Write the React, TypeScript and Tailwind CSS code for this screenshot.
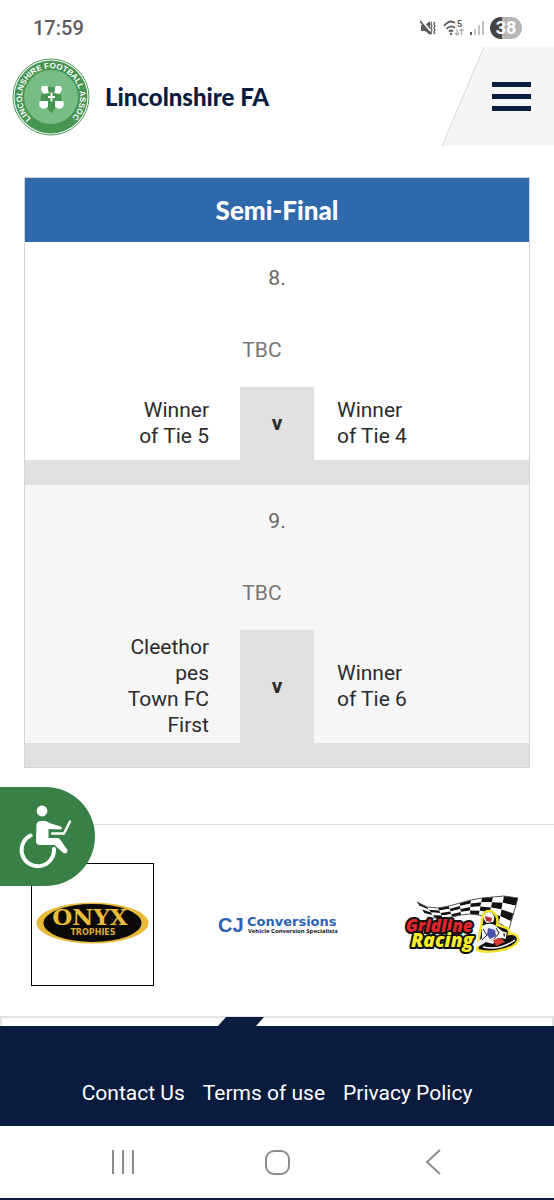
const rounds = [
  { number: 8, date: 'TBC', home: 'Winner of Tie 5', away: 'Winner of Tie 4', bg: 'bg-white' },
  { number: 9, date: 'TBC', home: 'Cleethorpes Town FC First', away: 'Winner of Tie 6', bg: 'bg-[#f6f6f6]' },
]

const footerLinks = ['Contact Us', 'Terms of use', 'Privacy Policy']

function StatusBar() {
  return (
    <div className="flex h-[47px] items-center justify-between pt-2 pr-8 pl-[33px] text-[#5c5c5c]">
      <span className="text-[20px] leading-6 font-medium">17:59</span>
      <div className="flex items-center gap-1.5">
        <svg width="16" height="16" viewBox="0 0 16 16" fill="none" stroke="currentColor">
          <path d="M1 5h4l5-4v14l-5-4H1z" fill="currentColor" stroke="none" />
          <path d="M1 0l11 13" stroke="#fff" strokeWidth="2" />
          <path d="M0 1l11 13" strokeWidth="1.6" />
          <path d="M11.8 2l-1 2 1.200 2-1.200 2 1.200 2-1.200 2 1 2M14.800 2l-1 2 1.200 2-1.200 2 1.200 2-1.200 2 1 2" strokeWidth="1.3" />
        </svg>
        <svg width="22" height="18" viewBox="0 0 22 18" fill="none" stroke="currentColor">
          <path d="M2 7Q8 0 13 4M4.500 9.800Q9 5.500 13 9M7 12.500q2-2 4 0" strokeWidth="1.8" />
          <circle cx="9" cy="15" r="1.2" fill="currentColor" stroke="none" />
          <path d="M15 10v6m-2-2l2 2 2-2M19.500 16v-6m-2 2l2-2 2 2" stroke="#aaa" strokeWidth="1.2" />
          <text x="15" y="8" fontSize="9" fontWeight="700" fill="currentColor" stroke="none">5</text>
        </svg>
        <svg width="14" height="16" viewBox="0 0 14 16">
          <rect y="12" width="2" height="3" fill="#5c5c5c" />
          <path d="M4 9h2v6H4zM8 5h2v10H8zM12 1h2v14h-2z" fill="#c4c4c4" />
        </svg>
        <span className="flex h-[22px] w-8 items-center justify-center rounded-full bg-linear-to-r from-[#444] from-38% to-[#b5b5b5] to-38% text-[18px] font-bold text-white">
          38
        </span>
      </div>
    </div>
  )
}

function Crest() {
  return (
    <svg width="78" height="78" viewBox="0 0 78 78" role="img" aria-label="Lincolnshire Football Association">
      <circle cx="39" cy="39" r="38" fill="#fff" stroke="#4a9a57" />
      <circle cx="39" cy="39" r="36.5" fill="#469551" />
      <circle cx="39" cy="39" r="27" fill="#79bd86" />
      <path id="crest-ring" d="M19 60.500A29 29 0 1 1 59 60.500" fill="none" />
      <text className="font-['Liberation_Sans']" fontSize="8" fontWeight="700" fill="#fff">
        <textPath href="#crest-ring">LINCOLNSHIRE FOOTBALL ASSOC</textPath>
      </text>
      <path d="M36 29h7v5h6l1 9h-6v6q-3 5-4.500 6Q38 54 35 50v-7h-7l2-9h6z" fill="#469551" />
      <path d="M30 28h5q2 2 1 4l1 3-6 1-2-5zM49 28h-5q-2 2-1 4l-1 3 6 1 2-5zM28 43h8v6q-4 3-7 1-3-3-1-7zM51 43h-8v6q4 3 7 1 3-3 1-7z" fill="#fff" />
      <path d="M39.500 34.500v9M36 39h7" stroke="#fff" strokeWidth="2" />
    </svg>
  )
}

function Header() {
  return (
    <header className="flex h-[99px] items-center pl-3">
      <a href="#home" className="flex items-center gap-[15px]">
        <Crest />
        <span className="font-['Lato'] text-[24px] leading-8 font-black text-[#091c3f]">Lincolnshire FA</span>
      </a>
      <button type="button" aria-label="Open menu" className="ml-auto flex h-full">
        <svg width="42" height="99" viewBox="0 0 42 99">
          <path d="M42 0v99H0z" fill="#f5f5f5" />
          <path d="M42 0L0 99" stroke="#d8d8d8" />
        </svg>
        <span className="flex h-full w-[70px] flex-col justify-center gap-[7px] bg-[#f5f5f5] pl-2">
          <span className="h-[5px] w-[39px] bg-[#091c3f]" />
          <span className="h-[5px] w-[39px] bg-[#091c3f]" />
          <span className="h-[5px] w-[39px] bg-[#091c3f]" />
        </span>
      </button>
    </header>
  )
}

function FixtureTable() {
  return (
    <table className="w-full table-fixed border-collapse border border-[#d4d4d4] text-[21px] leading-[26px]">
      <colgroup>
        <col />
        <col className="w-[74px]" />
        <col />
      </colgroup>
      <thead>
        <tr className="h-16 bg-[#2f68ab]">
          <th colSpan={3} className="font-['Lato'] text-[26px] font-black text-white">Semi-Final</th>
        </tr>
      </thead>
      {rounds.map(r => (
        <tbody key={r.number} className={r.bg}>
          <tr className="h-[72px]">
            <td colSpan={3} className="text-center text-[#666]">{r.number}.</td>
          </tr>
          <tr className="h-[73px]">
            <td colSpan={3} className="pr-[30px] text-center text-[#777]">{r.date}</td>
          </tr>
          <tr className="text-[#2b2b2b]">
            <td className="pt-1 pr-[31px] pb-[5px]">
              <div className="ml-auto w-[86px] text-right wrap-break-word">{r.home}</div>
            </td>
            <td className="h-[73px] bg-[#e0e0e0] text-center font-bold">v</td>
            <td className="pt-1 pb-[5px] pl-[23px]">
              <div className="w-[86px] wrap-break-word">{r.away}</div>
            </td>
          </tr>
          <tr className="h-[25px] bg-[#e0e0e0]">
            <td colSpan={3} />
          </tr>
        </tbody>
      ))}
    </table>
  )
}

function OnyxLogo() {
  return (
    <svg width="113" height="42" viewBox="0 0 113 42" role="img" aria-label="Onyx Trophies">
      <ellipse cx="56.5" cy="21" rx="56" ry="20.5" fill="#e9b93a" />
      <ellipse cx="56.5" cy="21" rx="49" ry="19" fill="#0c0a08" />
      <text x="54" y="23" textAnchor="middle" className="font-['DejaVu_Serif']" fontSize="23" fontWeight="700" fill="#ecbb3c">ONYX</text>
      <text x="57" y="33" textAnchor="middle" className="font-['DejaVu_Sans']" fontSize="8" fontWeight="700" fill="#d9a934">TROPHIES</text>
    </svg>
  )
}

function ConversionsLogo() {
  return (
    <svg width="122" height="28" viewBox="0 0 122 28" role="img" aria-label="CJ Conversions">
      <text x="2" y="21" className="font-['Liberation_Sans']" fontSize="20" fontWeight="700" fill="#2a62b5">CJ</text>
      <text x="31" y="15" className="font-['DejaVu_Sans']" fontSize="13" fontWeight="700" fill="#2a62b5">Conversions</text>
      <text x="32" y="22" className="font-['Noto_Sans']" fontSize="6" fontWeight="700" fill="#111">Vehicle Conversion Specialists</text>
    </svg>
  )
}

const flagTop = [[14, 7], [24, 12], [35, 13], [46, 11], [57, 8], [68, 5], [79, 3], [90, 2], [101, 1], [115, 3]]
const flagBottom = [[24, 22], [32, 23], [40, 23], [49, 22], [58, 20], [67, 19], [76, 20], [86, 23], [96, 28], [106, 34]]

// point on the flag: col runs along the edge, row goes from top (0) to bottom (4)
function flagPoint(col: number, row: number) {
  const [x1, y1] = flagTop[col]
  const [x2, y2] = flagBottom[col]
  return `${x1 + ((x2 - x1) * row) / 4},${y1 + ((y2 - y1) * row) / 4}`
}

function GridlineLogo() {
  return (
    <svg width="118" height="60" viewBox="0 0 118 60" role="img" aria-label="Gridline Racing">
      {[0, 1, 2, 3, 4, 5, 6, 7, 8].map(c =>
        [0, 1, 2, 3].map(r => (
          <polygon
            key={`${c}-${r}`}
            points={`${flagPoint(c, r)} ${flagPoint(c + 1, r)} ${flagPoint(c + 1, r + 1)} ${flagPoint(c, r + 1)}`}
            fill={(c + r) % 2 ? '#fff' : '#111'}
          />
        )),
      )}
      <polyline points={[...flagTop, ...[...flagBottom].reverse()].join(' ')} fill="none" stroke="#555" />
      <path d="M80 20q3-6 10-3 6 5 4 13l10 3q3 3 2 6 8-1 9 5 0 6-12 10-17 5-29 1z" fill="#111" stroke="#f4e32c" strokeWidth="2.5" />
      <g className="font-['Open_Sans']" fontWeight="800" fontStyle="italic" stroke="#111" strokeWidth="4" strokeLinejoin="round" paintOrder="stroke">
        <text x="3" y="37" fontSize="17" fill="#e3262e">Gridline</text>
        <text x="8" y="52" fontSize="19" fill="#f7ee2b">Racing</text>
      </g>
      <path d="M81 20q3-5 8-2 4 4 1 9l-6 1q-4-3-3-8z" fill="#fff" />
      <path d="M82 21l7 2-1 4-5-1z" fill="#b4323a" />
      <path d="M79 31q7-4 13-1l8 7 1 5-8 2-3 5-7-2-8 5-2-3 6-6z" fill="#f2f2f5" />
      <path d="M85 33l7 2 1 6-6 3-3-4z" fill="#4552a8" />
      <path d="M80 34l4 6-5 5M93 33l3 5-5 6" fill="none" stroke="#222" />
      <path d="M90 45l8-2 4 4-9 4z" fill="#d8392f" />
      <path d="M98 37l5 1-1 5-4-1zM80 52q17 4 32-7" fill="none" stroke="#fff" strokeWidth="1.5" />
    </svg>
  )
}

function Sponsors() {
  return (
    <section className="relative grid grid-cols-3 items-center justify-items-center border-t border-[#ddd] pt-[38px] pb-[30px]">
      <a href="#onyx" className="flex h-[123px] w-[123px] items-center justify-center border border-black pb-1">
        <OnyxLogo />
      </a>
      <a href="#conversions"><ConversionsLogo /></a>
      <a href="#gridline"><GridlineLogo /></a>

      <button type="button" aria-label="Accessibility options" className="absolute -top-[38px] left-0 h-[99px] w-[95px] rounded-r-full bg-[#388046] pl-[18px]">
        <svg width="56" height="64" viewBox="0 0 56 64" fill="none" stroke="#fff" strokeLinecap="round" strokeLinejoin="round">
          <circle cx="24" cy="6" r="5.4" fill="#fff" stroke="none" />
          <path d="M12.500 30.500A16.200 16.200 0 1 0 36 44" strokeWidth="4" />
          <path d="M18.500 19q1-3 5-3 4-1 8 2l11 3.500q3 1.500 0 3l-12-.500v9h9q2 0 3 2l7 10q0 4-4 3l-9-8H22q-4 0-4-4z" fill="#fff" stroke="none" />
          <path d="M34 28.500h12l6-12" strokeWidth="2.4" />
        </svg>
      </button>
    </section>
  )
}

function Footer() {
  return (
    <footer>
      <div className="flex h-[10px] items-end border-2 border-b-0 border-[#e2e2e2] pl-[216px]">
        <svg width="46" height="9" viewBox="0 0 46 9" className="shrink-0">
          <path d="M8 0h38l-8 9H0z" fill="#091c3f" />
        </svg>
      </div>
      <nav className="flex justify-center gap-[18px] bg-[#091c3f] pt-[54px] pb-5 text-[21px] leading-[26px] text-white">
        {footerLinks.map(l => (
          <a key={l} href="#footer">{l}</a>
        ))}
      </nav>
    </footer>
  )
}

function SystemNav() {
  return (
    <div className="grid grid-cols-3 border-b-2 border-[#091c3f] pr-[43px] pl-[45px] text-[#8c8c8c]">
      <button type="button" aria-label="Recent apps" className="flex h-[72px] items-center justify-center">
        <svg width="24" height="26" viewBox="0 0 24 26" fill="none" stroke="currentColor" strokeWidth="2">
          <path d="M2 1v24M12 1v24M22 1v24" />
        </svg>
      </button>
      <button type="button" aria-label="Home" className="flex h-[72px] items-center justify-center">
        <svg width="25" height="25" viewBox="0 0 25 25" fill="none" stroke="currentColor" strokeWidth="2">
          <rect x="1" y="1" width="23" height="23" rx="8" />
        </svg>
      </button>
      <button type="button" aria-label="Back" className="flex h-[72px] items-center justify-center">
        <svg width="16" height="26" viewBox="0 0 16 26" fill="none" stroke="currentColor" strokeWidth="2">
          <path d="M15 1L2 13l13 12" />
        </svg>
      </button>
    </div>
  )
}

export default function App() {
  return (
    <div className="bg-white font-['Roboto',sans-serif]">
      <StatusBar />
      <Header />
      <main className="px-6 pt-[31px] pb-14">
        <FixtureTable />
      </main>
      <Sponsors />
      <Footer />
      <SystemNav />
    </div>
  )
}
